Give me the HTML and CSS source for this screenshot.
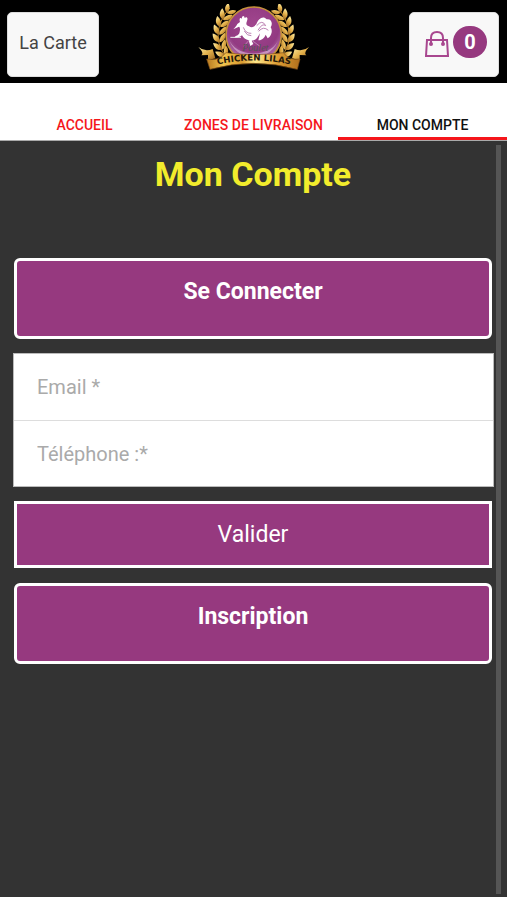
FILE: index.html
```html
<!DOCTYPE html>
<html lang="fr">
<head>
<meta charset="utf-8">
<meta name="viewport" content="width=device-width, initial-scale=1">
<title>Chicken Lilas - Mon Compte</title>
<link rel="stylesheet" href="styles.css">
</head>
<body>
<header class="topbar">
  <button class="top-button" type="button">La Carte</button>
  <svg class="logo" viewBox="18 12 342 198" role="img" aria-label="Chicken Lilas">
    <defs>
      <linearGradient id="gold" x1="0" y1="0" x2="1" y2="1">
        <stop offset="0" stop-color="#fff0a8"/>
        <stop offset=".5" stop-color="#e3b04a"/>
        <stop offset="1" stop-color="#9a6420"/>
      </linearGradient>
      <linearGradient id="ribbon" x1="0" y1="0" x2="1" y2="0">
        <stop offset="0" stop-color="#b87920"/>
        <stop offset=".18" stop-color="#f0c24c"/>
        <stop offset=".38" stop-color="#d99a30"/>
        <stop offset=".52" stop-color="#ffe98c"/>
        <stop offset=".75" stop-color="#dfa036"/>
        <stop offset="1" stop-color="#b06f1c"/>
      </linearGradient>
      <radialGradient id="disc" cx=".5" cy=".35" r=".65">
        <stop offset="0" stop-color="#a2478f"/>
        <stop offset=".7" stop-color="#923a82"/>
        <stop offset="1" stop-color="#b777ae"/>
      </radialGradient>
      <g id="leaf">
        <path d="M0 0C-16-2-21-14-18-29C-5-23 3-12 0 0Z"/>
        <path d="M0 0C-1-13 8-22 19-26C21-11 13-2 0 0Z"/>
      </g>
      <g id="branch">
        <path d="M106 170C72 132 71 76 116 24" fill="none" stroke="#c08a2e" stroke-width="3"/>
        <use href="#leaf" transform="translate(104 168) rotate(-36)"/>
        <use href="#leaf" transform="translate(94 149) rotate(-22)"/>
        <use href="#leaf" transform="translate(87 127) rotate(-8)"/>
        <use href="#leaf" transform="translate(85 104) rotate(4)"/>
        <use href="#leaf" transform="translate(88 81) rotate(16)"/>
        <use href="#leaf" transform="translate(96 59) rotate(28)"/>
        <use href="#leaf" transform="translate(108 39) rotate(40) scale(.9)"/>
      </g>
      <path id="arc" d="M50 201Q188 162 328 201"/>
    </defs>
    <g fill="url(#gold)">
      <use href="#branch"/>
      <use href="#branch" transform="translate(376 0) scale(-1 1)"/>
    </g>
    <circle cx="188" cy="104" r="83" fill="url(#disc)" stroke="#c5913c" stroke-width="5"/>
    <path d="M112 112A78 78 0 0 0 264 112C251 174 130 180 112 112Z" fill="#dcb5d9" opacity=".65"/>
    <path d="M127 88C132 82 136 79 139 72L147 66C144 57 147 51 152 56C154 45 160 47 161 54C167 48 172 53 168 63C164 72 166 77 174 79C184 85 190 79 196 73C201 57 216 45 227 58C240 55 247 70 239 82C247 94 239 111 230 115L224 104C219 117 208 121 202 121L207 100C197 119 190 122 182 122L187 132L178 138L173 121C164 119 157 114 153 106C146 112 139 114 130 113L134 108C141 107 145 102 146 96C148 88 147 81 144 80Z" fill="#fff"/>
    <path d="M197 77Q214 57 224 77Q214 68 201 91M203 94Q217 77 232 91M157 82Q164 101 181 100M160 93Q169 109 181 107M174 121L158 139M185 123L207 139" fill="none" stroke="#bd83b4" stroke-width="3"/>
    <path d="M118 112H150" fill="none" stroke="#eee" stroke-width="3"/>
    <text class="logo-script" x="193" y="152" text-anchor="middle">Poulet</text>
    <path d="M22 141Q42 157 65 147L73 175L51 181L51 165L31 166Q41 160 22 141Z" fill="url(#gold)"/>
    <path d="M354 141Q334 157 311 147L303 175L326 181L326 165L346 166Q336 160 354 141Z" fill="url(#gold)"/>
    <path d="M47 177Q84 184 105 158Q188 170 277 158Q294 182 327 177L319 208Q188 172 57 208Z" fill="url(#ribbon)" stroke="#835119" stroke-width="2"/>
    <text class="logo-name" text-anchor="middle"><textPath href="#arc" startOffset="50%">CHICKEN LILAS</textPath></text>
  </svg>
  <button class="top-button cart" type="button" aria-label="Panier, 0 article">
    <svg class="bag" viewBox="0 0 24 26" aria-hidden="true">
      <path d="M2 9H22L23 25H1Z"/>
      <path d="M6 13V7Q6 1 12 1Q18 1 18 7V13"/>
      <circle cx="6" cy="13" r="1"/>
      <circle cx="18" cy="13" r="1"/>
    </svg>
    <span class="count">0</span>
  </button>
</header>
<nav class="tabs">
  <a class="tab" href="#accueil">ACCUEIL</a>
  <a class="tab" href="#zones">ZONES DE LIVRAISON</a>
  <a class="tab active" href="#compte" aria-current="page">MON COMPTE</a>
</nav>
<main class="account">
  <h1 class="title">Mon Compte</h1>
  <button class="panel-button" type="button">Se Connecter</button>
  <form class="login">
    <div class="fields">
      <input class="field" type="email" placeholder="Email *" aria-label="Email">
      <input class="field" type="tel" placeholder="Téléphone :*" aria-label="Téléphone">
    </div>
    <button class="submit" type="button">Valider</button>
  </form>
  <button class="panel-button" type="button">Inscription</button>
</main>
</body>
</html>
```
FILE: styles.css
```css
* {
  box-sizing: border-box;
}

body {
  margin: 0;
  min-height: 100vh;
  display: flex;
  flex-direction: column;
  padding-bottom: 3px;
  background: #fff;
  font-family: Roboto, "Liberation Sans", sans-serif;
}

button,
input {
  font-family: inherit;
  margin: 0;
}

.topbar {
  display: flex;
  align-items: center;
  justify-content: space-between;
  padding: 12px 8px 6px 7px;
  background: #000;
}

.top-button {
  display: flex;
  align-items: center;
  justify-content: center;
  width: 92px;
  height: 65px;
  padding: 0 0 4px;
  border: 1px solid #ddd;
  border-radius: 5px;
  background: #f8f8f8;
  color: #444;
  font-size: 18px;
}

.logo {
  width: 114px;
  height: 66px;
  margin-top: -16px;
}

.logo-script {
  font: italic 30px "Liberation Serif", serif;
  fill: #555;
}

.logo-name {
  font: bold 26px "DejaVu Sans", sans-serif;
  fill: #24170a;
}

.cart {
  width: 90px;
  gap: 4px;
  padding: 0 0 6px 4px;
}

.bag {
  width: 24px;
  height: 26px;
  margin-top: 4px;
  fill: none;
  stroke: #a8478f;
  stroke-width: 2;
}

.count {
  width: 34px;
  border-radius: 16px;
  background: #96397f;
  color: #fff;
  font-size: 20px;
  font-weight: 700;
  line-height: 32px;
  text-align: center;
}

.tabs {
  display: grid;
  grid-template-columns: repeat(3, 1fr);
  background: #fff;
  border-bottom: 1px solid #aaa;
}

.tab {
  padding: 33px 0 3px;
  border-bottom: 3px solid transparent;
  color: #f5161b;
  font-size: 14px;
  font-weight: 500;
  line-height: 18px;
  text-align: center;
  text-decoration: none;
  white-space: nowrap;
}

.tab.active {
  border-color: #f5161b;
  color: #111;
}

.account {
  position: relative;
  flex: 1;
  display: flex;
  flex-direction: column;
  gap: 15px;
  padding: 13px 15px 12px 14px;
  background: #333;
}

.account::after {
  content: "";
  position: absolute;
  top: 4px;
  right: 6px;
  bottom: 3px;
  width: 5px;
  background: #555;
}

.title {
  margin: 0 0 49px;
  color: #f2ec2c;
  font-size: 34px;
  font-weight: 700;
  line-height: 40px;
  text-align: center;
}

.panel-button,
.submit {
  border: 3px solid #fff;
  background: #96397f;
  color: #fff;
  font-size: 23px;
}

.panel-button {
  height: 81px;
  padding: 0 0 14px;
  border-radius: 6px;
  font-weight: 700;
}

.login {
  display: flex;
  flex-direction: column;
  gap: 14px;
  margin-top: -1px;
}

.fields {
  display: flex;
  flex-direction: column;
  margin: 0 -2px 0 -1px;
  border: 1px solid #bbb;
  background: #fff;
}

.field {
  height: 66px;
  padding: 0 23px;
  border: 0;
  background: transparent;
  color: #333;
  font-size: 20px;
}

.field + .field {
  border-top: 1px solid #ddd;
}

.field::placeholder {
  color: #aaa;
}

.submit {
  height: 67px;
  padding: 0;
}
```
